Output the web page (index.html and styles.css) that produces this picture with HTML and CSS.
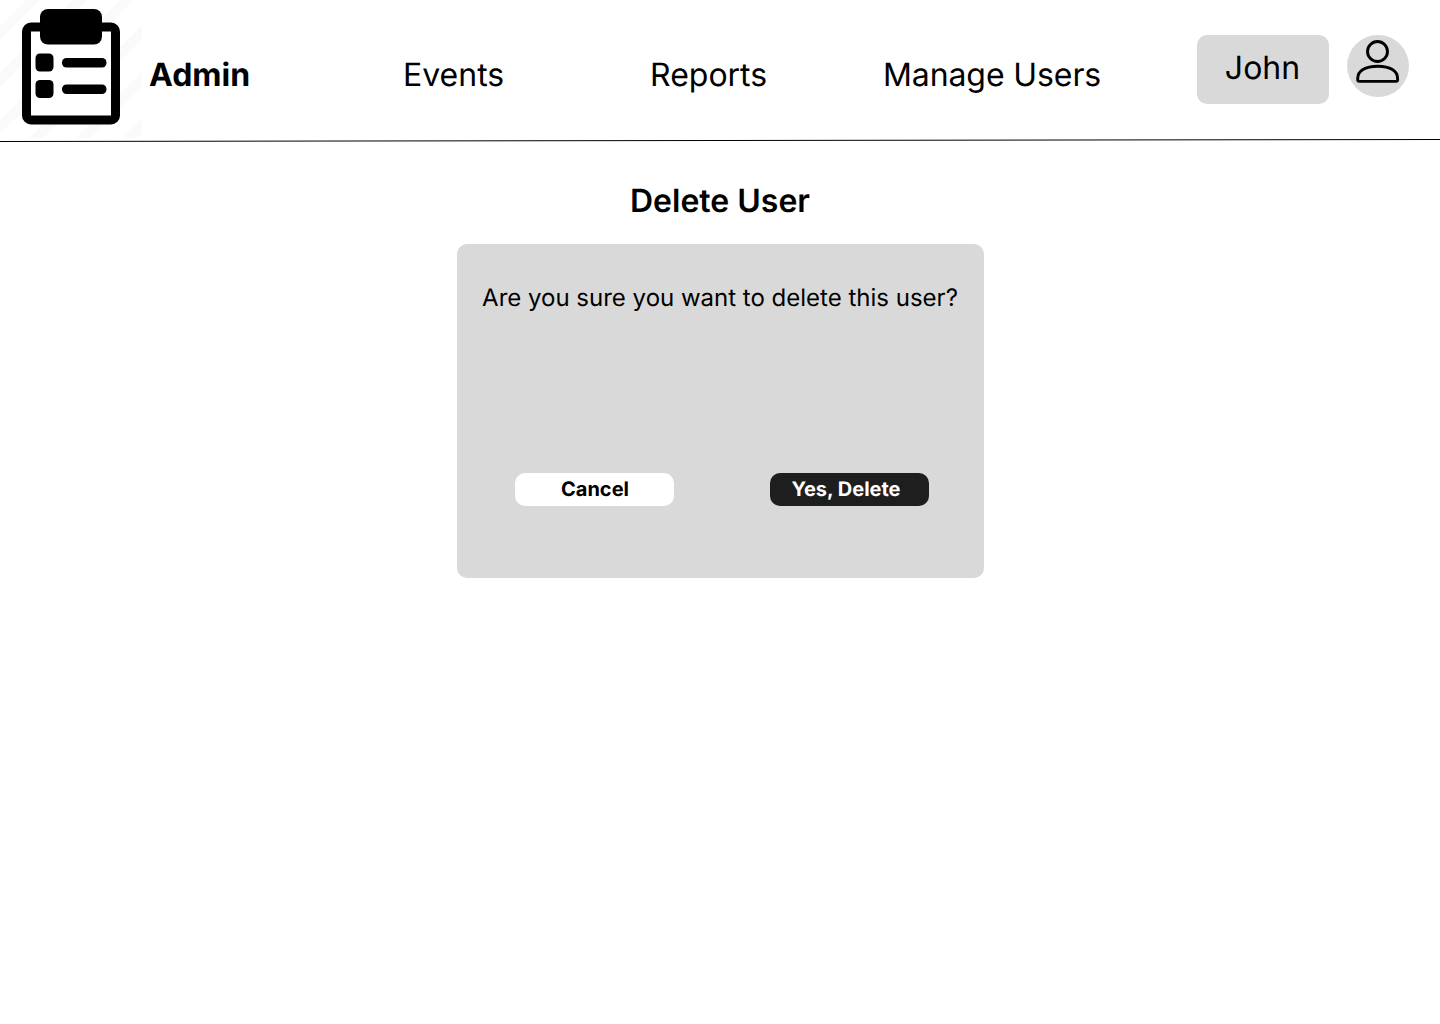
FILE: index.html
```html
<!DOCTYPE html>
<html lang="en">
<head>
<meta charset="utf-8">
<title>Delete User</title>
<link rel="stylesheet" href="styles.css">
</head>
<body>
<header class="topbar">
  <svg class="logo" viewBox="0 0 142 138" aria-hidden="true">
    <g class="logo-stripes">
      <path d="M38-5L-5 38M85-5L-5 85M132-5L-5 132M179-5L-5 179M226-5L-5 226M273-5L-5 273"/>
    </g>
    <rect class="logo-board" x="26.5" y="27" width="89" height="93" rx="4.5"/>
    <rect x="40" y="9" width="62" height="35.5" rx="8"/>
    <rect x="35.5" y="53.5" width="18" height="18" rx="4.5"/>
    <rect x="35.5" y="80" width="18" height="18" rx="4.5"/>
    <rect x="62" y="58" width="44.5" height="9.5" rx="4.5"/>
    <rect x="62" y="84.5" width="44.5" height="9.5" rx="4.5"/>
  </svg>
  <span class="brand">Admin</span>
  <nav class="nav">
    <a class="nav-events">Events</a>
    <a class="nav-reports">Reports</a>
    <a class="nav-users">Manage Users</a>
  </nav>
  <div class="account">
    <span class="account-name">John</span>
    <svg class="avatar" viewBox="0 0 62 62" aria-hidden="true">
      <circle class="avatar-bg" cx="31" cy="31" r="31"/>
      <ellipse class="avatar-line" cx="30.5" cy="16.5" rx="10" ry="10"/>
      <path class="avatar-line" d="M10.7 43.5C10.7 36 18 31.2 30.7 31.2S50.6 36 50.6 43.5V44.8Q50.6 46.4 49 46.4H12.3Q10.7 46.4 10.7 44.8Z"/>
    </svg>
  </div>
</header>
<svg class="divider" viewBox="0 0 1440 4" aria-hidden="true"><path d="M0 2.5L1440 .5"/></svg>
<main class="content">
  <h1 class="title">Delete User</h1>
  <section class="dialog">
    <p class="question">Are you sure you want to delete this user?</p>
    <div class="actions">
      <button class="btn btn-cancel">Cancel</button>
      <button class="btn btn-delete">Yes, Delete</button>
    </div>
  </section>
</main>
</body>
</html>
```
FILE: styles.css
```css
* { box-sizing: border-box; }
body {
  margin: 0;
  background: #fff;
  color: #000;
  font-family: Inter, sans-serif;
  text-rendering: geometricPrecision;
}
.topbar {
  display: flex;
  height: 139px;
  font-size: 32px;
  line-height: 39px;
}
.logo { width: 142px; height: 138px; flex: none; }
.logo-stripes { stroke: #fafafa; stroke-width: 10; }
.logo-board { fill: #fff; stroke: #000; stroke-width: 9; }
.brand { width: 252px; padding: 55px 0 0 7px; font-weight: 700; }
.nav { display: flex; width: 803px; padding: 55px 0 0 9px; white-space: nowrap; }
.nav-events { width: 247px; }
.nav-reports { width: 233px; }
.nav-users { letter-spacing: -0.1px; }
.nav a { flex: none; }
.account { display: flex; gap: 18px; padding-top: 35px; }
.account-name {
  width: 132px;
  height: 69px;
  padding: 13px 1px 0 0;
  border-radius: 10px;
  background: #d9d9d9;
  text-align: center;
}
.avatar { width: 62px; height: 62px; }
.avatar-bg { fill: #d9d9d9; }
.avatar-line { fill: none; stroke: #000; stroke-width: 2.9; }
.divider { display: block; width: 1440px; height: 4px; }
.divider path { stroke: #000; stroke-width: 1; }
.content { display: flex; flex-direction: column; align-items: center; }
.title {
  margin: 38px 0 24px;
  font-size: 32px;
  line-height: 39px;
  font-weight: 600;
}
.dialog {
  width: 527px;
  height: 334px;
  margin-left: 1px;
  padding-top: 39px;
  border-radius: 10px;
  background: #d9d9d9;
}
.question {
  margin: 0 1px 161px 0;
  font-size: 24px;
  line-height: 29px;
  text-align: center;
  white-space: nowrap;
}
.actions { display: flex; gap: 96px; padding-left: 58px; }
.btn {
  width: 159px;
  height: 33px;
  padding: 0;
  border: 0;
  border-radius: 10px;
  font: 700 20px/33px Inter, sans-serif;
  text-rendering: inherit;
}
.btn-cancel { padding-left: 1px; background: #fff; color: #000; }
.btn-delete { padding-right: 7px; background: #1e1e1e; color: #fff; }
```
